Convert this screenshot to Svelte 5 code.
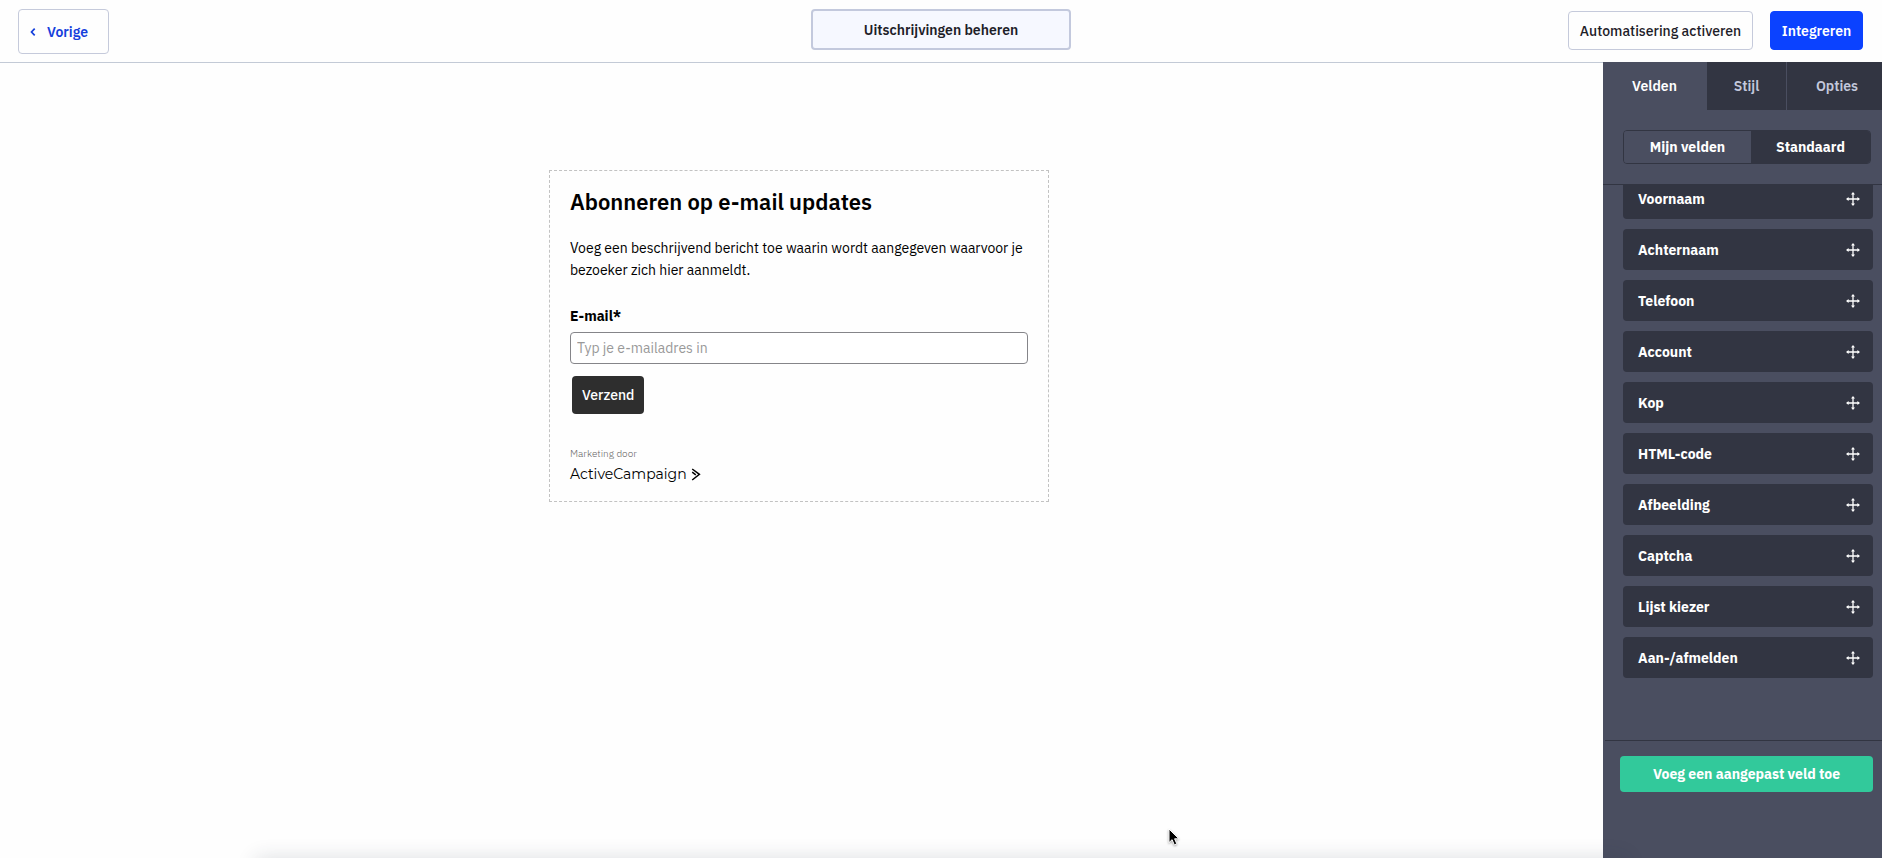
<script>
  const tabs = ['Velden', 'Stijl', 'Opties'];
  const fields = [
    'Voornaam', 'Achternaam', 'Telefoon', 'Account', 'Kop',
    'HTML-code', 'Afbeelding', 'Captcha', 'Lijst kiezer', 'Aan-/afmelden'
  ];
  let activeTab = $state('Velden');
  let email = $state('');
</script>

<div class="app">
  <header>
    <button class="btn back" type="button">
      <svg width="6" height="10" viewBox="0 0 6 10" aria-hidden="true"><path d="M4.7 1.6 1.5 5l3.2 3.4" fill="none" stroke="currentColor" stroke-width="1.7" /></svg>
      Vorige
    </button>
    <button class="btn manage" type="button">Uitschrijvingen beheren</button>
    <div class="actions">
      <button class="btn" type="button">Automatisering activeren</button>
      <button class="btn primary" type="button">Integreren</button>
    </div>
  </header>

  <div class="body">
    <main>
      <form class="form" onsubmit={(e) => e.preventDefault()}>
        <h1>Abonneren op e-mail updates</h1>
        <p class="intro">Voeg een beschrijvend bericht toe waarin wordt aangegeven waarvoor je bezoeker zich hier aanmeldt.</p>
        <label for="email">E-mail*</label>
        <input id="email" type="text" placeholder="Typ je e-mailadres in" bind:value={email} />
        <button class="submit" type="submit">Verzend</button>
        <p class="by">Marketing door</p>
        <a class="brand" href="#activecampaign">
          ActiveCampaign
          <svg width="10" height="13" viewBox="0 0 10 13" aria-hidden="true">
            <path d="M1.2 1 8.4 6.3 1.2 12M1.2 4.2 4.8 6.8" fill="none" stroke="currentColor" stroke-width="1.5" />
          </svg>
        </a>
      </form>
    </main>

    <aside>
      <nav class="tabs">
        {#each tabs as tab}
          <button type="button" class:active={tab === activeTab} onclick={() => (activeTab = tab)}>{tab}</button>
        {/each}
      </nav>
      <div class="switch">
        <button type="button">Mijn velden</button>
        <button type="button" class="on">Standaard</button>
      </div>
      <div class="list">
        <ul>
          {#each fields as field}
            <li>
              <span>{field}</span>
              <svg width="14" height="14" viewBox="0 0 14 14" aria-hidden="true">
                <path d="M7 1.5v11M1.5 7h11" stroke="currentColor" stroke-width="1.3" />
                <path d="M7 0 9 2.6H5zM7 14 5 11.4h4zM0 7l2.6-2v4zM14 7l-2.6 2V5z" fill="currentColor" />
              </svg>
            </li>
          {/each}
        </ul>
      </div>
      <footer>
        <button type="button">Voeg een aangepast veld toe</button>
      </footer>
    </aside>
  </div>

  <div class="edge"></div>
  <svg class="cursor" width="13" height="19" viewBox="0 0 13 19" aria-hidden="true">
    <path d="M1 1v13.6l3.1-2.9 2.2 5.2 2.5-1.1-2.2-5h4.3z" fill="#000" stroke="#fff" stroke-width="1" />
  </svg>
</div>

<style>
  :global(body) {
    margin: 0;
  }
  .app {
    position: relative;
    display: flex;
    flex-direction: column;
    min-height: 100vh;
    overflow: hidden;
    background: #fefefe;
    color: #1d2028;
    font-family: "IBM Plex Sans", Roboto, sans-serif;
    font-size: 14px;
  }
  .app * {
    box-sizing: border-box;
  }
  button,
  input {
    margin: 0;
    font: inherit;
  }
  button {
    border: 0;
    padding: 0;
    cursor: pointer;
  }
  header {
    display: grid;
    grid-template-columns: 1fr auto 1fr;
    align-items: start;
    padding: 9px 18px 8px;
  }
  .btn {
    height: 39px;
    padding: 0 10px;
    border: 1px solid #c5cadb;
    border-radius: 4px;
    background: #fefefe;
    color: #1d2028;
    font-weight: 500;
    white-space: nowrap;
  }
  .btn.back {
    display: flex;
    align-items: center;
    justify-self: start;
    gap: 11px;
    width: 91px;
    height: 45px;
    padding: 0 11px;
    color: #1540dc;
    font-weight: 600;
  }
  .btn.manage {
    width: 260px;
    height: 41px;
    border: 2px solid #c3c9dd;
    background: #f6f8ff;
    font-weight: 600;
  }
  .actions {
    display: flex;
    justify-content: flex-end;
    gap: 17px;
    padding: 2px 1px 0 0;
  }
  .actions .btn {
    min-width: 93px;
  }
  .actions .btn:first-child {
    min-width: 185px;
  }
  .btn.primary {
    border-color: #0b42ff;
    background: #0b42ff;
    color: #fff;
    font-weight: 600;
  }
  .body {
    display: flex;
    flex: 1;
  }
  main {
    flex: 1;
    padding: 107px 5px 40px 0;
    border-top: 1px solid #c3cad6;
  }
  .form {
    display: flex;
    flex-direction: column;
    align-items: flex-start;
    max-width: 500px;
    margin: 0 auto;
    padding: 16px 20px 15px;
    border: 1px dashed #c2c2c2;
    color: #000;
  }
  h1 {
    margin: 0 0 20px;
    font-size: 22px;
    line-height: 30px;
    font-weight: 600;
  }
  .intro {
    margin: 0 0 25px;
    line-height: 22px;
  }
  label {
    margin-bottom: 6px;
    line-height: 20px;
    font-weight: 700;
  }
  input {
    width: 100%;
    height: 32px;
    padding: 0 6px;
    border: 1px solid #858589;
    border-radius: 4px;
    background: #fff;
  }
  input::placeholder {
    color: #999;
    opacity: 1;
  }
  .submit {
    height: 38px;
    margin: 12px 2px 32px;
    padding: 0 10px;
    border-radius: 4px;
    background: #2e2e2e;
    color: #fff;
    font-weight: 500;
  }
  .by {
    margin: 0;
    color: #666;
    font-size: 10px;
    line-height: 16px;
    font-weight: 300;
  }
  .brand {
    display: flex;
    align-items: center;
    gap: 4px;
    color: #000;
    font-family: Montserrat, Lato, sans-serif;
    font-size: 14px;
    line-height: 24px;
    text-decoration: none;
  }
  aside {
    display: flex;
    flex-direction: column;
    flex: 0 0 279px;
    background: #4a4e60;
  }
  .tabs {
    display: grid;
    grid-template-columns: 104fr 80fr 95fr;
    height: 48px;
  }
  .tabs button {
    border-right: 1px solid #4a4e60;
    background: #323542;
    color: #c3c8dc;
    font-weight: 600;
  }
  .tabs button:last-child {
    padding-left: 5px;
    border-right: 0;
  }
  .tabs .active {
    background: #4a4e60;
    color: #fff;
  }
  .switch {
    display: grid;
    grid-template-columns: 128fr 120fr;
    height: 34px;
    margin: 20px 11px 20px 20px;
    overflow: hidden;
    border: 1px solid #323542;
    border-radius: 4px;
  }
  .switch button {
    background: #4a4e60;
    color: #fff;
    font-weight: 700;
  }
  .switch .on {
    background: #323542;
  }
  .list {
    flex: 1;
    overflow: hidden;
    border-top: 1px solid #323542;
  }
  ul {
    display: flex;
    flex-direction: column;
    gap: 10px;
    margin: -7px 9px 0 20px;
    padding: 0;
    list-style: none;
  }
  li {
    display: flex;
    align-items: center;
    justify-content: space-between;
    height: 41px;
    padding: 0 13px 0 15px;
    border-radius: 4px;
    background: #323542;
    color: #fff;
    font-weight: 700;
  }
  footer {
    height: 118px;
    margin-left: 2px;
    padding: 15px 9px 0 15px;
    border-top: 1px solid #323542;
  }
  footer button {
    width: 100%;
    height: 36px;
    border-radius: 4px;
    background: #32c99b;
    color: #fff;
    font-weight: 700;
  }
  .edge {
    position: absolute;
    top: 100%;
    left: 256px;
    right: 256px;
    height: 20px;
    box-shadow: 0 0 20px rgba(40, 50, 70, 0.16);
  }
  .cursor {
    position: absolute;
    left: 1168px;
    top: 828px;
    filter: drop-shadow(0 1px 1px rgba(0, 0, 0, 0.35));
  }
</style>
